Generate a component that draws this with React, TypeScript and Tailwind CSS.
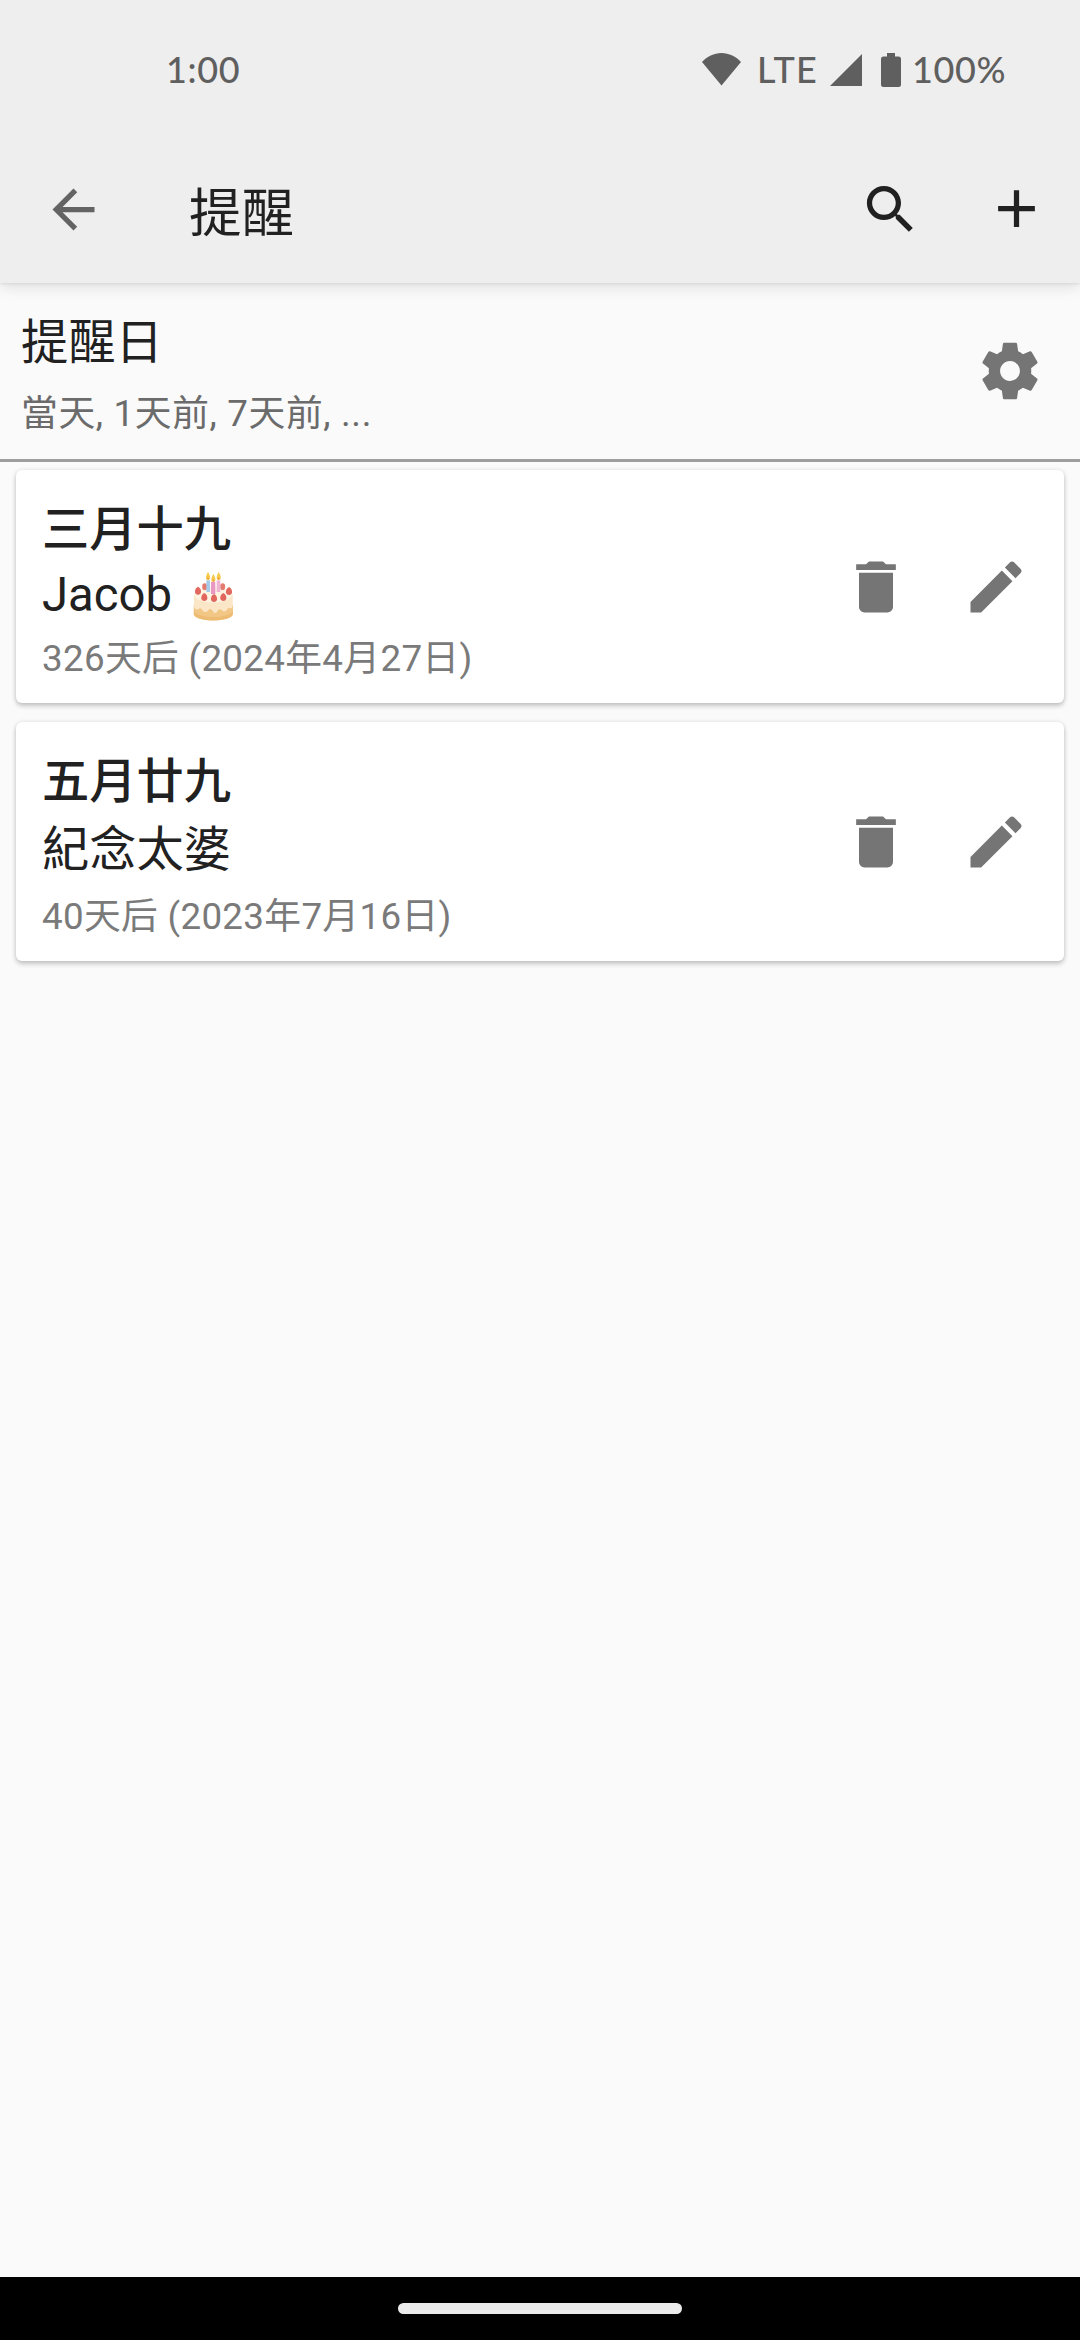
import type { ReactNode } from "react";

const ARROW_BACK = "M20 11H7.83l5.59-5.59L12 4l-8 8 8 8 1.41-1.41L7.83 13H20v-2z";
const SEARCH =
  "M15.5 14h-.79l-.28-.27C15.41 12.59 16 11.11 16 9.5 16 5.91 13.09 3 9.5 3S3 5.91 3 9.5 5.91 16 9.5 16c1.61 0 3.09-.59 4.23-1.57l.27.28v.79l5 4.99L20.49 19l-4.99-5zm-6 0C7.01 14 5 11.99 5 9.5S7.01 5 9.5 5 14 7.01 14 9.5 11.99 14 9.5 14z";
const ADD = "M19 13h-6v6h-2v-6H5v-2h6V5h2v6h6v2z";
const SETTINGS =
  "M19.43 12.98c.04-.32.07-.64.07-.98s-.03-.66-.07-.98l2.11-1.65c.19-.15.24-.42.12-.64l-2-3.46c-.12-.22-.39-.3-.61-.22l-2.49 1c-.52-.4-1.08-.73-1.69-.98l-.38-2.65C14.46 2.18 14.25 2 14 2h-4c-.25 0-.46.18-.49.42l-.38 2.65c-.61.25-1.17.59-1.69.98l-2.49-1c-.23-.09-.49 0-.61.22l-2 3.46c-.13.22-.07.49.12.64l2.11 1.65c-.04.32-.07.65-.07.98s.03.66.07.98l-2.11 1.65c-.19.15-.24.42-.12.64l2 3.46c.12.22.39.3.61.22l2.49-1c.52.4 1.08.73 1.69.98l.38 2.65c.03.24.24.42.49.42h4c.25 0 .46-.18.49-.42l.38-2.65c.61-.25 1.17-.59 1.69-.98l2.49 1c.23.09.49 0 .61-.22l2-3.46c.12-.22.07-.49-.12-.64l-2.11-1.65zM12 15.5c-1.93 0-3.5-1.57-3.5-3.5s1.57-3.5 3.5-3.5 3.5 1.57 3.5 3.5-1.57 3.5-3.5 3.5z";
const DELETE = "M6 19c0 1.1.9 2 2 2h8c1.1 0 2-.9 2-2V7H6v12zM19 4h-3.5l-1-1h-5l-1 1H5v2h14V4z";
const EDIT =
  "M3 17.25V21h3.75L17.81 9.94l-3.75-3.75L3 17.25zM20.71 7.04c.39-.39.39-1.02 0-1.41l-2.34-2.34c-.39-.39-1.02-.39-1.41 0l-1.83 1.83 3.75 3.75 1.83-1.83z";

function Icon({ d, className }: { d: string; className: string }) {
  return (
    <svg viewBox="0 0 24 24" fill="currentColor" className={`shrink-0 ${className}`}>
      <path d={d} />
    </svg>
  );
}

const STRAWBERRIES = [
  [74, 80],
  [128, 80],
  [54, 92],
  [147, 93],
  [73, 111],
  [102, 114],
  [130, 111],
];

function Cake() {
  return (
    <svg viewBox="36 33 126 150" className="ml-[20px] mt-[2px] h-[50px] w-[42px]" role="img" aria-label="🎂">
      <path d="M41 135v28c5 25 113 25 118 0v-28Z" fill="#f2c684" />
      <path d="M42 153c12 24 104 24 116 0v10c-6 24-110 24-116 0Z" fill="#eebb72" />
      <ellipse cx="100" cy="106" rx="58" ry="26" fill="#fdf3e1" />
      <path
        d="M42 106v36c5 8 12 9 17 3 6-4 10 13 18 11 9-1 8-10 14-9 7 1 8 12 14 12 8 0 7-10 14-11 7 0 9 9 16 6 7-4 8-12 14-10 5 2 8-1 9-5v-33Z"
        fill="#fbe6c8"
      />
      <ellipse cx="100" cy="104" rx="56" ry="24" fill="#fdf3e1" />
      {STRAWBERRIES.slice(0, 2).map(([x, y]) => (
        <ellipse key={x} cx={x} cy={y} rx="7.500" ry="10" fill="#e47b70" />
      ))}
      <path d="M79 61h11v35H79Z" fill="#a6cbe9" />
      <path d="M110 61h11v35h-11Z" fill="#f0b4d3" />
      <path d="M93 66h13v36H93Z" fill="#ea97c3" />
      <path d="M84 36c10 16 7 24 0 24s-9-9 0-24Z M116 36c10 16 7 24 0 24s-9-9 0-24Z M100 42c10 16 7 24 0 24s-9-9 0-24Z" fill="#f7cb4d" />
      <path d="M84 50c4 6 3 9 0 9s-4-3 0-9Z M116 50c4 6 3 9 0 9s-4-3 0-9Z M100 56c4 6 3 9 0 9s-4-3 0-9Z" fill="#ee9d40" />
      {STRAWBERRIES.slice(2).map(([x, y]) => (
        <path
          key={x}
          d={`M${x} ${y - 12}q10 6 9 16q-1 8-9 8t-9-8q-1-10 9-16Z`}
          fill="#e2685f"
        />
      ))}
    </svg>
  );
}

function StatusBar() {
  return (
    <div className="flex h-[136px] items-start pl-[166px] pr-[73px] pt-[47px] font-['Lato','Liberation_Sans',sans-serif] text-[36px] font-medium leading-[44px] tracking-[0.6px] text-[#5f5f5f]">
      <span className="flex-1">1:00</span>
      <svg viewBox="0 0 39 33" fill="currentColor" className="mt-[6px] h-[33px] w-[39px]">
        <path d="M19.5 32.5 0 9C5 3.500 12 0 19.500 0S34 3.500 39 9Z" />
      </svg>
      <span className="ml-[16px] w-[63px] tracking-[1.2px]">LTE</span>
      <svg viewBox="0 0 32 32" fill="currentColor" className="ml-[10px] mt-[7px] h-[32px] w-[32px]">
        <path d="M32 0V32H0Z" />
      </svg>
      <svg viewBox="0 0 20 34" fill="currentColor" className="ml-[19px] mr-[11px] mt-[6px] h-[34px] w-[20px]">
        <path d="M6 0h8v3.500h3.500q2.500 0 2.500 2.500v25.500q0 2.500-2.500 2.500h-15Q0 34 0 31.500V6q0-2.500 2.500-2.500H6Z" />
      </svg>
      <span className="w-[95px]">100%</span>
    </div>
  );
}

interface ReminderProps {
  date: string;
  name: ReactNode;
  when: string;
  className: string;
  nameClass: string;
}

function Reminder({ date, name, when, className, nameClass }: ReminderProps) {
  return (
    <article
      className={`flex items-center rounded-[6px] bg-white pl-[26px] pr-[34px] shadow-[0_3px_5px_rgba(0,0,0,0.2),0_0_4px_rgba(0,0,0,0.1)] ${className}`}
    >
      <div className="flex-1 self-start pt-[28px]">
        <h2 className="h-[65px] text-[47.25px] font-medium leading-[64px] text-[#212121]">{date}</h2>
        <p className={`flex items-center text-[47.25px] text-[#212121] ${nameClass}`}>{name}</p>
        <p className="h-[64px] text-[36.75px] leading-[64px] tracking-[0.32px] text-[#7a7a7a]">{when}</p>
      </div>
      <div className="flex gap-[52px] text-[#757575]">
        <Icon d={DELETE} className="size-[68px]" />
        <Icon d={EDIT} className="size-[68px]" />
      </div>
    </article>
  );
}

export default function App() {
  return (
    <div className="flex h-[2340px] w-[1080px] flex-col overflow-hidden bg-[#fafafa] font-['Roboto','Noto_Sans_CJK_TC',sans-serif]">
      <header className="relative h-[283px] bg-[#eeeeee] shadow-[0_4px_14px_rgba(0,0,0,0.11),0_1px_3px_rgba(0,0,0,0.08)]">
        <StatusBar />
        <div className="flex h-[147px] items-center pl-[42px] pr-[32px]">
          <Icon d={ARROW_BACK} className="size-[63px] text-[#636363]" />
          <h1 className="ml-[84px] flex-1 pt-[8px] text-[52.5px] leading-[70px] text-[#212121]">提醒</h1>
          <Icon d={SEARCH} className="size-[63px] text-[#212121]" />
          <Icon d={ADD} className="mb-[2px] ml-[63px] size-[63px] text-[#212121]" />
        </div>
      </header>

      <section className="flex h-[179px] items-center border-b-[3px] border-[#9e9e9e] pl-[21px] pr-[36px]">
        <div className="flex-1 pt-[15px]">
          <h2 className="text-[47.25px] leading-[70px] text-[#212121]">提醒日</h2>
          <p className="text-[36.75px] leading-[72px] tracking-[0.65px] text-[#6b6b6b]">當天, 1天前, 7天前, ...</p>
        </div>
        <Icon d={SETTINGS} className="size-[68px] text-[#757575]" />
      </section>

      <main className="flex flex-1 flex-col gap-[19px] px-[16px] pt-[8px]">
        <Reminder
          date="三月十九"
          name={
            <>
              Jacob
              <Cake />
            </>
          }
          when="326天后 (2024年4月27日)"
          className="h-[233px]"
          nameClass="h-[64px] leading-[64px]"
        />
        <Reminder
          date="五月廿九"
          name="紀念太婆"
          when="40天后 (2023年7月16日)"
          className="h-[239px]"
          nameClass="h-[70px] leading-[73px]"
        />
      </main>

      <footer className="flex h-[63px] justify-center bg-black pt-[26px]">
        <div className="h-[11px] w-[284px] rounded-full bg-[#ebebeb]" />
      </footer>
    </div>
  );
}
